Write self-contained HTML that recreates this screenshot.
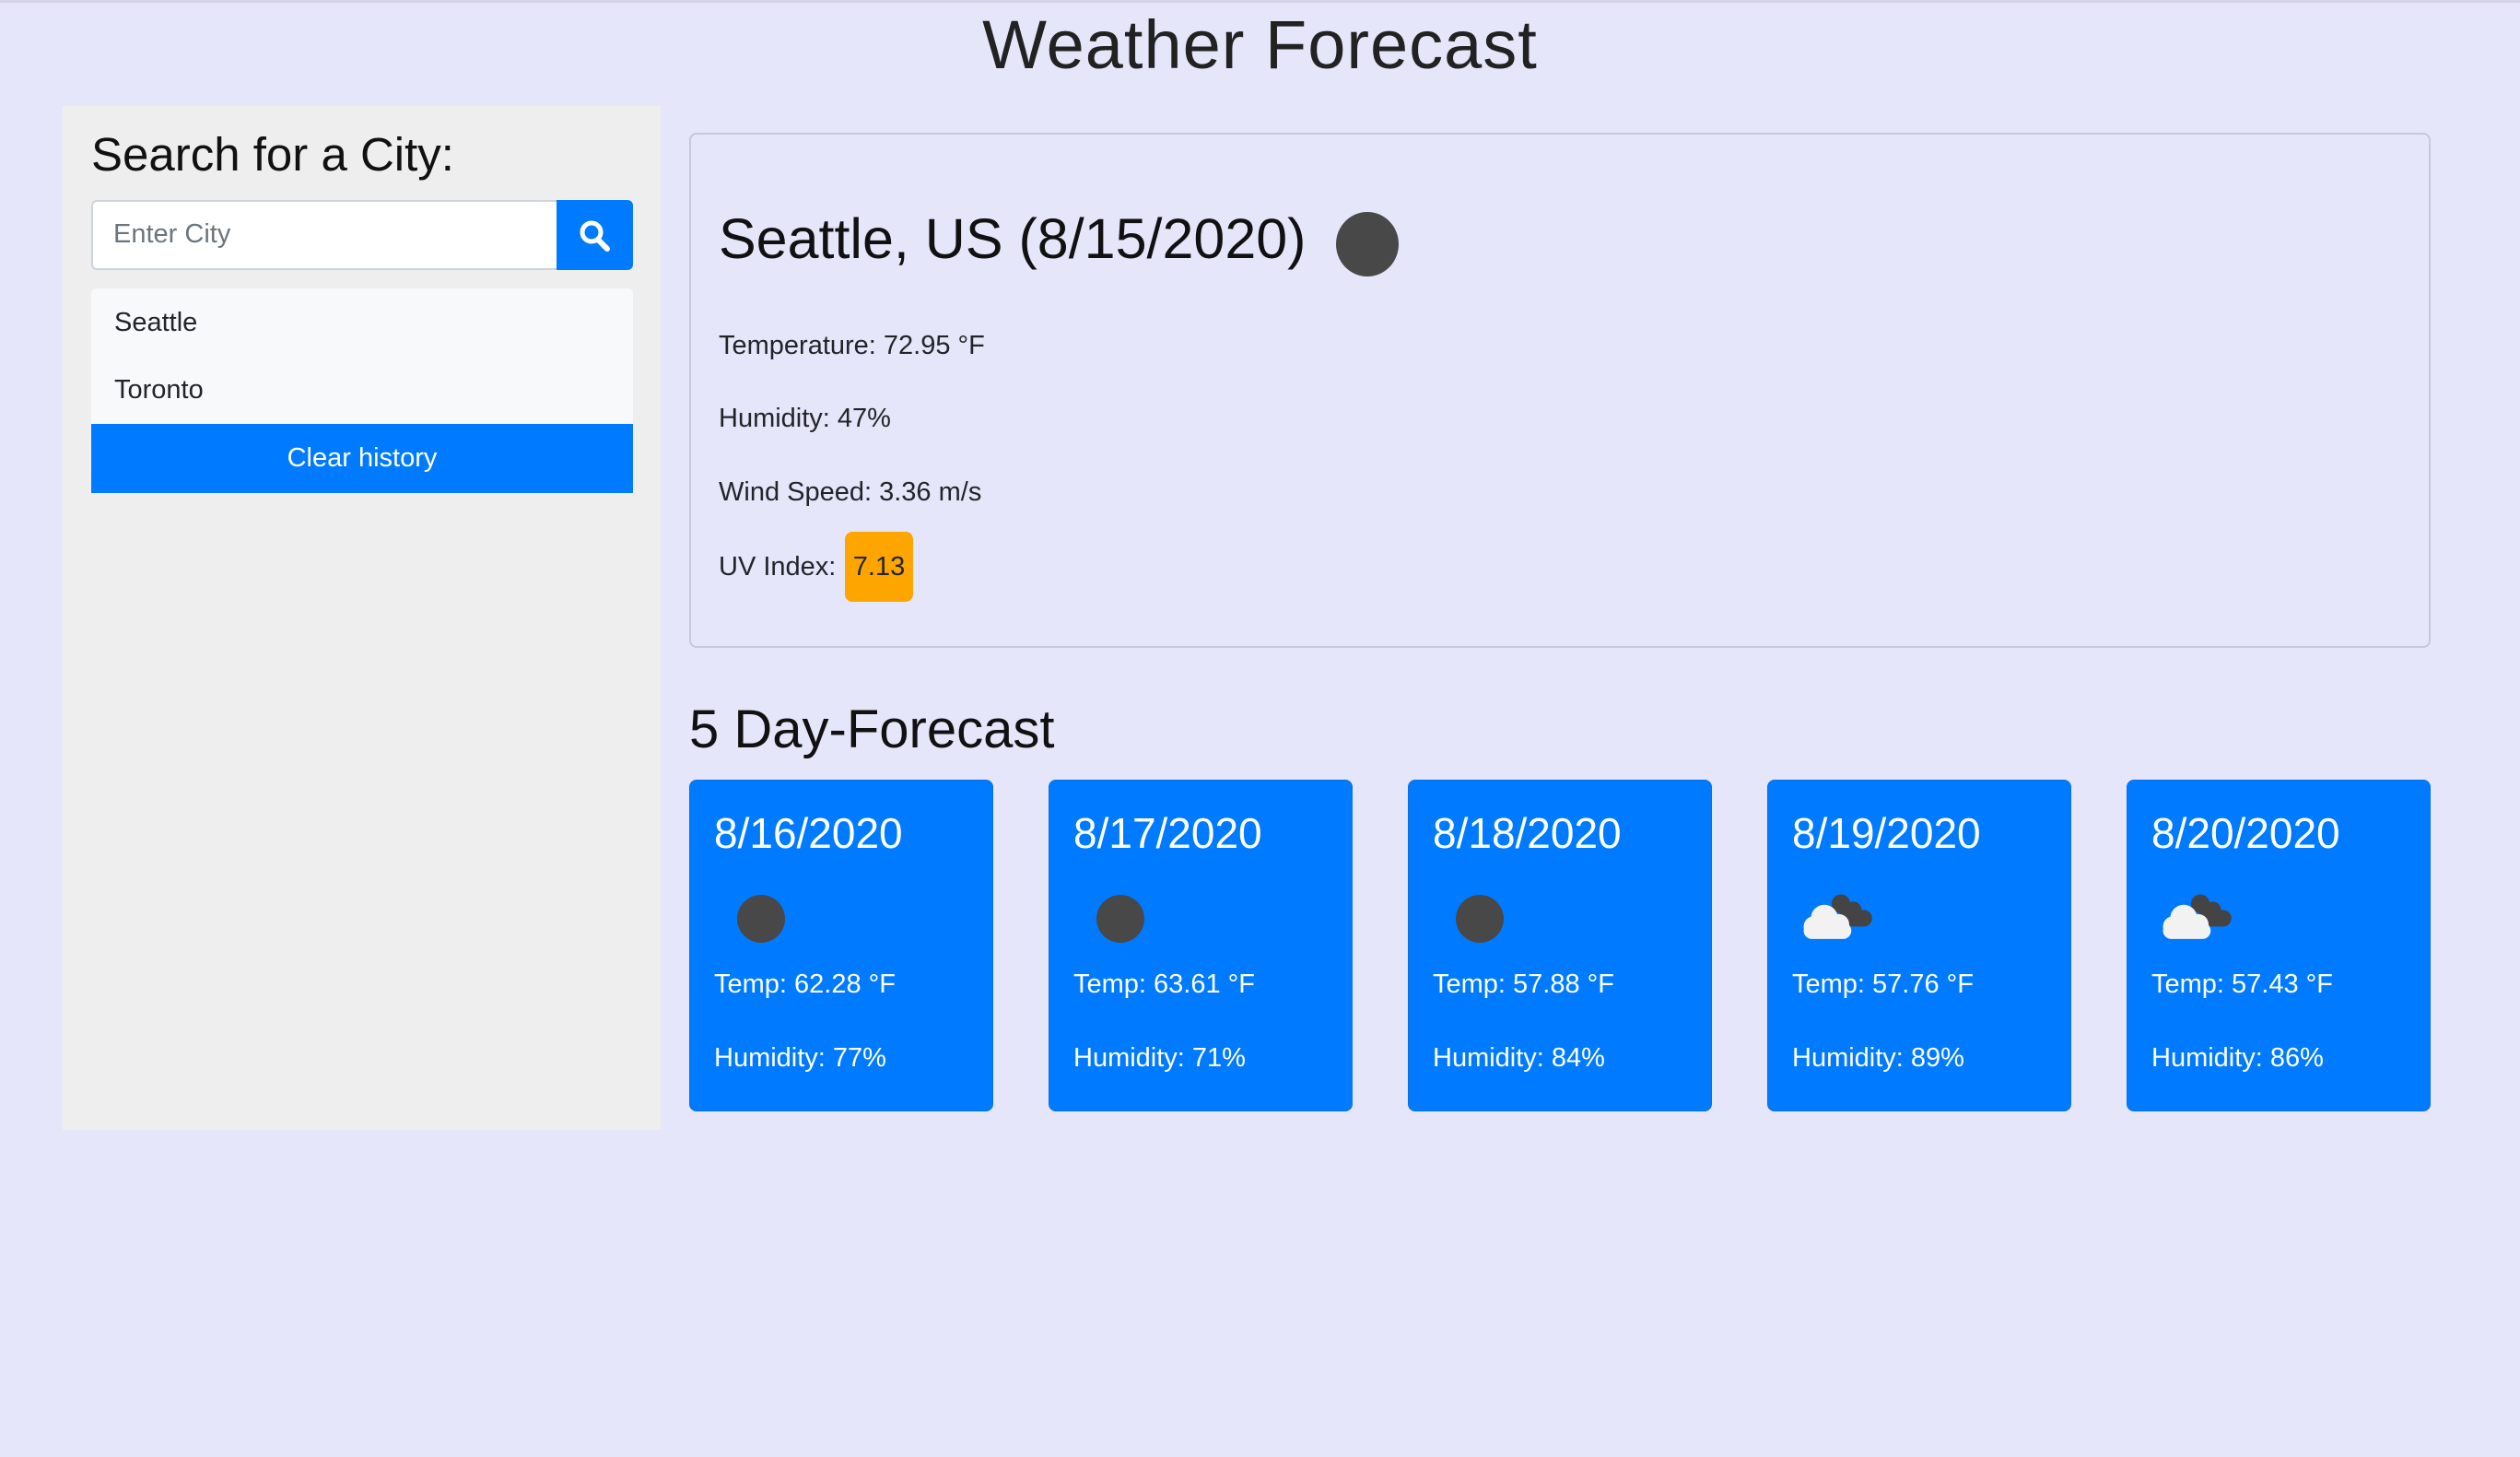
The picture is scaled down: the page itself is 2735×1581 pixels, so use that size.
<!DOCTYPE html>
<html><head><meta charset="utf-8"><style>
*{margin:0;padding:0;box-sizing:border-box}
body{width:2735px;height:1581px;background:#e6e6fa;font-family:"Liberation Sans",sans-serif;color:#212529;position:relative;overflow:hidden}
.top{position:absolute;left:0;top:0;width:2735px;height:3px;background:#d4d4e4}
.a{position:absolute;white-space:nowrap;line-height:1}
.card{position:absolute;top:846px;width:330px;height:360px;background:#007bff;border:1px solid #0a6fe0;border-radius:8px;color:#fff}
.card .d{position:absolute;left:26px;top:34px;font-size:46px;line-height:1}
.card .t{position:absolute;left:26px;top:207px;font-size:29px;line-height:1}
.card .h{position:absolute;left:26px;top:287px;font-size:29px;line-height:1}
.card .dot{position:absolute;left:51px;top:124px;width:52px;height:52px;border-radius:50%;background:#484848}
.card svg{position:absolute;left:34px;top:116px}
</style></head><body>
<div class="top"></div>
<div class="a" style="left:0;width:2735px;text-align:center;top:12px;font-size:74px;color:#222;letter-spacing:1px">Weather Forecast</div>

<div style="position:absolute;left:68px;top:115px;width:649px;height:1111px;background:#eeeeee"></div>
<div class="a" style="left:99px;top:142px;font-size:51px;color:#111">Search for a City:</div>
<div style="position:absolute;left:99px;top:217px;width:510px;height:76px;background:#fff;border:2px solid #ced4da;border-radius:6px 0 0 6px"></div>
<div class="a" style="left:123px;top:240px;font-size:29px;color:#6c757d">Enter City</div>
<div style="position:absolute;left:604px;top:217px;width:83px;height:76px;background:#007bff;border-radius:0 6px 6px 0">
<svg width="83" height="76" viewBox="0 0 83 76"><circle cx="38" cy="35" r="10" fill="none" stroke="#fff" stroke-width="5"/><line x1="45" y1="43" x2="55" y2="53" stroke="#fff" stroke-width="6" stroke-linecap="round"/></svg></div>
<div style="position:absolute;left:99px;top:313px;width:588px;height:147px;background:#f8f9fa;border-radius:6px 6px 0 0"></div>
<div class="a" style="left:124px;top:336px;font-size:29px">Seattle</div>
<div class="a" style="left:124px;top:409px;font-size:29px">Toronto</div>
<div style="position:absolute;left:99px;top:460px;width:588px;height:75px;background:#007bff"></div>
<div class="a" style="left:99px;width:588px;text-align:center;top:483px;font-size:29px;color:#fff">Clear history</div>

<div style="position:absolute;left:748px;top:144px;width:1890px;height:559px;border:2px solid #c8c8da;border-radius:8px"></div>
<div class="a" style="left:780px;top:229px;font-size:61px;color:#111">Seattle, US (8/15/2020)</div>
<div style="position:absolute;left:1450px;top:230px;width:68px;height:70px;border-radius:50%;background:#484848"></div>
<div class="a" style="left:780px;top:361px;font-size:29px">Temperature: 72.95 °F</div>
<div class="a" style="left:780px;top:440px;font-size:29px">Humidity: 47%</div>
<div class="a" style="left:780px;top:520px;font-size:29px">Wind Speed: 3.36 m/s</div>
<div class="a" style="left:780px;top:601px;font-size:29px">UV Index:</div>
<div style="position:absolute;left:917px;top:577px;width:74px;height:76px;background:#ffa500;border-radius:8px"></div>
<div class="a" style="left:917px;width:74px;text-align:center;top:601px;font-size:29px">7.13</div>

<div class="a" style="left:748px;top:763px;font-size:58px;color:#111">5 Day-Forecast</div>

<div class="card" style="left:748px"><div class="d">8/16/2020</div><div class="dot"></div><div class="t">Temp: 62.28 °F</div><div class="h">Humidity: 77%</div></div>
<div class="card" style="left:1138px"><div class="d">8/17/2020</div><div class="dot"></div><div class="t">Temp: 63.61 °F</div><div class="h">Humidity: 71%</div></div>
<div class="card" style="left:1528px"><div class="d">8/18/2020</div><div class="dot"></div><div class="t">Temp: 57.88 °F</div><div class="h">Humidity: 84%</div></div>
<div class="card" style="left:1918px"><div class="d">8/19/2020</div>
<svg width="90" height="60" viewBox="0 0 80 50"><g fill="#444"><circle cx="40" cy="14" r="9"/><circle cx="52" cy="20" r="8"/><circle cx="62" cy="28" r="8"/><rect x="38" y="20" width="30" height="16" rx="7"/></g><g fill="#f2f2f2"><circle cx="24" cy="28" r="13"/><circle cx="14" cy="36" r="10"/><circle cx="38" cy="34" r="10"/><rect x="4" y="32" width="46" height="16" rx="8"/></g></svg>
<div class="t">Temp: 57.76 °F</div><div class="h">Humidity: 89%</div></div>
<div class="card" style="left:2308px"><div class="d">8/20/2020</div>
<svg width="90" height="60" viewBox="0 0 80 50"><g fill="#444"><circle cx="40" cy="14" r="9"/><circle cx="52" cy="20" r="8"/><circle cx="62" cy="28" r="8"/><rect x="38" y="20" width="30" height="16" rx="7"/></g><g fill="#f2f2f2"><circle cx="24" cy="28" r="13"/><circle cx="14" cy="36" r="10"/><circle cx="38" cy="34" r="10"/><rect x="4" y="32" width="46" height="16" rx="8"/></g></svg>
<div class="t">Temp: 57.43 °F</div><div class="h">Humidity: 86%</div></div>
</body></html>
